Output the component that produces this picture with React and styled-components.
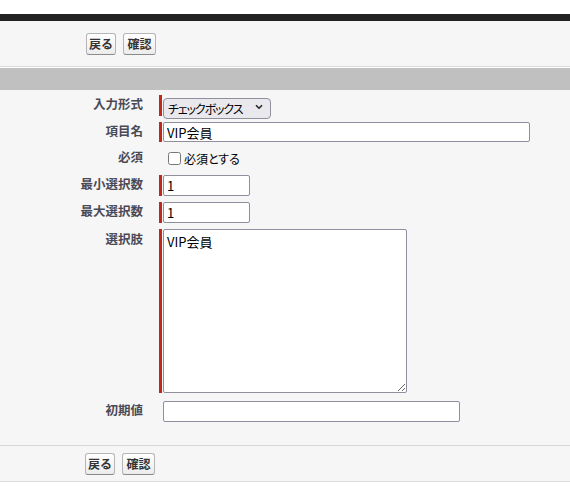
import styled, { createGlobalStyle } from "styled-components";

const GlobalStyle = createGlobalStyle`
  html, body {
    margin: 0;
    padding: 0;
    background: #fff;
  }
  body {
    font-family: "Noto Sans CJK JP", "Liberation Sans", sans-serif;
    color: #000;
  }
`;

const Page = styled.div`
  width: 570px;
  padding-top: 14px;
`;

const TopBar = styled.div`
  height: 7px;
  background: #222;
`;

const Panel = styled.div`
  background: #f6f6f6;
`;

const ButtonRow = styled.div`
  display: flex;
  gap: 7px;
  padding: ${(p) => (p.$bottom ? "7px 0 6px 85px" : "12px 0 11px 86px")};
  border-top: ${(p) => (p.$bottom ? "1px solid #d6d6d6" : "none")};
  border-bottom: 1px solid ${(p) => (p.$bottom ? "#dddddd" : "#dbdbdb")};
`;

const Button = styled.button`
  height: 22px;
  padding: 0 2px;
  font-family: "Noto Sans CJK JP", sans-serif;
  font-size: 12px;
  font-weight: bold;
  line-height: 20px;
  color: #333;
  background: linear-gradient(#ffffff, #ececec);
  border: 1px solid #b5b5b5;
  border-bottom-color: #8a8a8a;
  border-radius: 3px;
  width: ${(p) => p.$w}px;
`;

const SectionHeader = styled.div`
  height: 22px;
  border-top: 1px solid #fff;
  background: #c0c0c0;
`;

const Form = styled.div`
  display: flex;
  flex-direction: column;
  gap: 6px;
  padding: 5px 0 23px;
`;

const Row = styled.div`
  display: flex;
  align-items: flex-start;
  margin-top: ${(p) => p.$extra || 0}px;
`;

const Label = styled.div`
  width: 143px;
  padding-right: 16px;
  padding-top: ${(p) => p.$top ?? 1}px;
  text-align: right;
  font-size: 12.5px;
  font-weight: bold;
  line-height: 16px;
  color: #4a4a56;
  font-feature-settings: "palt";
`;

const Field = styled.div`
  display: flex;
  align-items: stretch;
  padding-left: ${(p) => (p.$required ? 0 : 4)}px;

  &::before {
    content: "";
    display: ${(p) => (p.$required ? "block" : "none")};
    width: 3px;
    margin-right: 1px;
    background: #c0281c;
  }
`;

const SelectWrap = styled.div`
  position: relative;
  width: 108px;
  height: 21px;
`;

const Select = styled.select`
  appearance: none;
  box-sizing: border-box;
  width: 100%;
  height: 100%;
  padding: 0 0 0 4px;
  font-family: "Noto Sans CJK JP", sans-serif;
  font-size: 12px;
  letter-spacing: -1.1px;
  font-feature-settings: "palt";
  color: #000;
  background: #e9e9ed;
  border: 1px solid #8f8f9d;
  border-radius: 4px;
`;

const Chevron = styled.svg`
  position: absolute;
  right: 8px;
  top: 9px;
  pointer-events: none;
`;

const TextInput = styled.input`
  box-sizing: border-box;
  width: ${(p) => p.$w}px;
  height: ${(p) => p.$h || 20}px;
  padding: 0 3px;
  font-family: "Noto Sans CJK JP", "Liberation Sans", sans-serif;
  font-size: 13px;
  color: #000;
  background: #fff;
  border: 1px solid #8f8f9d;
  border-radius: 2px;
  outline: none;
`;

const TextArea = styled.textarea`
  box-sizing: border-box;
  width: 244px;
  height: 164px;
  padding: 2px 3px;
  font-family: "Noto Sans CJK JP", "Liberation Sans", sans-serif;
  font-size: 13px;
  color: #000;
  background: #fff;
  border: 1px solid #8f8f9d;
  border-radius: 2px;
  outline: none;
`;

const CheckLabel = styled.label`
  display: flex;
  align-items: center;
  height: 21px;
  font-size: 12px;
  color: #000;
  font-feature-settings: "palt";

  input {
    width: 13px;
    height: 13px;
    margin: 0 3px 0 5px;
  }
`;

export default function App() {
  return (
    <>
      <GlobalStyle />
      <Page>
        <TopBar />
        <Panel>
          <ButtonRow>
            <Button $w={30}>戻る</Button>
            <Button $w={33}>確認</Button>
          </ButtonRow>
          <SectionHeader />
          <Form>
            <Row>
              <Label>入力形式</Label>
              <Field $required>
                <SelectWrap>
                  <Select defaultValue="checkbox">
                    <option value="checkbox">チェックボックス</option>
                  </Select>
                  <Chevron width="8" height="6" viewBox="0 0 8 6">
                    <path d="M1 1.2 L4 4.2 L7 1.2" fill="none" stroke="#222" strokeWidth="1.6" />
                  </Chevron>
                </SelectWrap>
              </Field>
            </Row>
            <Row>
              <Label>項目名</Label>
              <Field $required>
                <TextInput $w={367} defaultValue="VIP会員" />
              </Field>
            </Row>
            <Row>
              <Label>必須</Label>
              <Field>
                <CheckLabel>
                  <input type="checkbox" />
                  必須とする
                </CheckLabel>
              </Field>
            </Row>
            <Row>
              <Label>最小選択数</Label>
              <Field $required>
                <TextInput $w={87} $h={21} defaultValue="1" />
              </Field>
            </Row>
            <Row>
              <Label>最大選択数</Label>
              <Field $required>
                <TextInput $w={87} $h={21} defaultValue="1" />
              </Field>
            </Row>
            <Row>
              <Label $top={2}>選択肢</Label>
              <Field $required>
                <TextArea defaultValue="VIP会員" />
              </Field>
            </Row>
            <Row $extra={2}>
              <Label>初期値</Label>
              <Field>
                <TextInput $w={297} $h={21} />
              </Field>
            </Row>
          </Form>
          <ButtonRow $bottom>
            <Button $w={30}>戻る</Button>
            <Button $w={33}>確認</Button>
          </ButtonRow>
        </Panel>
      </Page>
    </>
  );
}
